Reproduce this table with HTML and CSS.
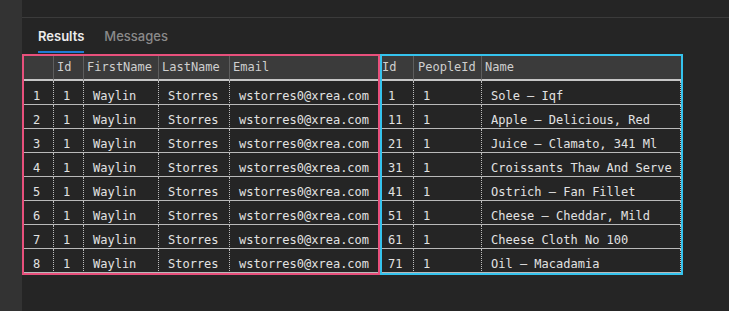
FILE: index.html
```html
<!DOCTYPE html>
<html>
<head>
<meta charset="utf-8">
<link rel="stylesheet" href="styles.css">
</head>
<body>
<div class="app">
  <div class="strip"></div>
  <div class="main">
    <div class="topbar"></div>
    <div class="tabs">
      <div class="tab active">Results</div>
      <div class="tab">Messages</div>
    </div>
    <div class="grids">
      <table class="grid pink">
        <colgroup><col class="c-rn"><col class="c-id"><col class="c-fn"><col class="c-ln"><col class="c-em"></colgroup>
        <thead>
          <tr><th></th><th>Id</th><th>FirstName</th><th>LastName</th><th>Email</th></tr>
        </thead>
        <tbody>
          <tr><td>1</td><td>1</td><td>Waylin</td><td>Storres</td><td>wstorres0@xrea.com</td></tr>
          <tr><td>2</td><td>1</td><td>Waylin</td><td>Storres</td><td>wstorres0@xrea.com</td></tr>
          <tr><td>3</td><td>1</td><td>Waylin</td><td>Storres</td><td>wstorres0@xrea.com</td></tr>
          <tr><td>4</td><td>1</td><td>Waylin</td><td>Storres</td><td>wstorres0@xrea.com</td></tr>
          <tr><td>5</td><td>1</td><td>Waylin</td><td>Storres</td><td>wstorres0@xrea.com</td></tr>
          <tr><td>6</td><td>1</td><td>Waylin</td><td>Storres</td><td>wstorres0@xrea.com</td></tr>
          <tr><td>7</td><td>1</td><td>Waylin</td><td>Storres</td><td>wstorres0@xrea.com</td></tr>
          <tr><td>8</td><td>1</td><td>Waylin</td><td>Storres</td><td>wstorres0@xrea.com</td></tr>
        </tbody>
      </table>
      <table class="grid blue">
        <colgroup><col class="c-id2"><col class="c-pid"><col class="c-name"></colgroup>
        <thead>
          <tr><th class="tight">Id</th><th class="wide">PeopleId</th><th>Name</th></tr>
        </thead>
        <tbody>
          <tr><td class="narrow">1</td><td>1</td><td>Sole – Iqf</td></tr>
          <tr><td class="narrow">11</td><td>1</td><td>Apple – Delicious, Red</td></tr>
          <tr><td class="narrow">21</td><td>1</td><td>Juice – Clamato, 341 Ml</td></tr>
          <tr><td class="narrow">31</td><td>1</td><td>Croissants Thaw And Serve</td></tr>
          <tr><td class="narrow">41</td><td>1</td><td>Ostrich – Fan Fillet</td></tr>
          <tr><td class="narrow">51</td><td>1</td><td>Cheese – Cheddar, Mild</td></tr>
          <tr><td class="narrow">61</td><td>1</td><td>Cheese Cloth No 100</td></tr>
          <tr><td class="narrow">71</td><td>1</td><td>Oil – Macadamia</td></tr>
        </tbody>
      </table>
    </div>
  </div>
</div>
</body>
</html>
```
FILE: styles.css
```css
html, body {
  margin: 0;
  padding: 0;
  background: #252525;
  height: 100%;
}
.app {
  display: flex;
  height: 311px;
  overflow: hidden;
}
.strip {
  width: 22px;
  flex: none;
  background: #333333;
}
.main {
  flex: 1;
  display: flex;
  flex-direction: column;
}
.topbar {
  height: 17px;
  border-bottom: 1px solid #3b3b3b;
  flex: none;
}
.tabs {
  display: flex;
  gap: 20px;
  padding-left: 16px;
  height: 35px;
  align-items: flex-end;
  font-family: Inter, "Noto Sans", sans-serif;
  font-size: 13px;
}
.tab {
  color: #8a8a8a;
  line-height: 16px;
  padding-bottom: 7px;
  border-bottom: 2px solid transparent;
  font-weight: 500;
}
.tab.active {
  color: #ececec;
  font-weight: 600;
  border-bottom-color: #1f7bd3;
}
.grids {
  display: flex;
  margin-top: 1px;
}
.grid {
  border-collapse: separate;
  border-spacing: 0;
  table-layout: fixed;
  font-family: "DejaVu Sans Mono", monospace;
  font-size: 12px;
  white-space: nowrap;
}
.pink { border: 2px solid #e8507c; width: 358px; }
.blue { border: 2px solid #35c3ee; width: 303px; }
.c-rn { width: 30px; }
.c-id { width: 30px; }
.c-fn { width: 75px; }
.c-ln { width: 71px; }
.c-em { width: 148px; }
.c-id2 { width: 32px; }
.c-pid { width: 68px; }
.c-name { width: 199px; }
th {
  background: #3b3b3b;
  color: #cfcfcf;
  font-weight: normal;
  text-align: left;
  height: 23px;
  box-sizing: border-box;
  padding: 4px 0 5px 3px;
  line-height: 14px;
  vertical-align: top;
  border-right: 1px solid #5e5e5e;
  border-bottom: 2px solid #c6c6c6;
  overflow: hidden;
}
th:last-child { border-right: none; }
th.tight { padding-left: 0; }
th.wide { padding-left: 4px; }
td {
  color: #e2e2e2;
  height: 24px;
  box-sizing: border-box;
  padding: 8px 0 1px 9px;
  line-height: 14px;
  vertical-align: top;
  border-right: 1px dotted #bdbdbd;
  border-bottom: 1px solid #bababa;
  overflow: hidden;
}
.pink td:last-child { border-right: none; }
td.narrow { padding-left: 6px; }
```
